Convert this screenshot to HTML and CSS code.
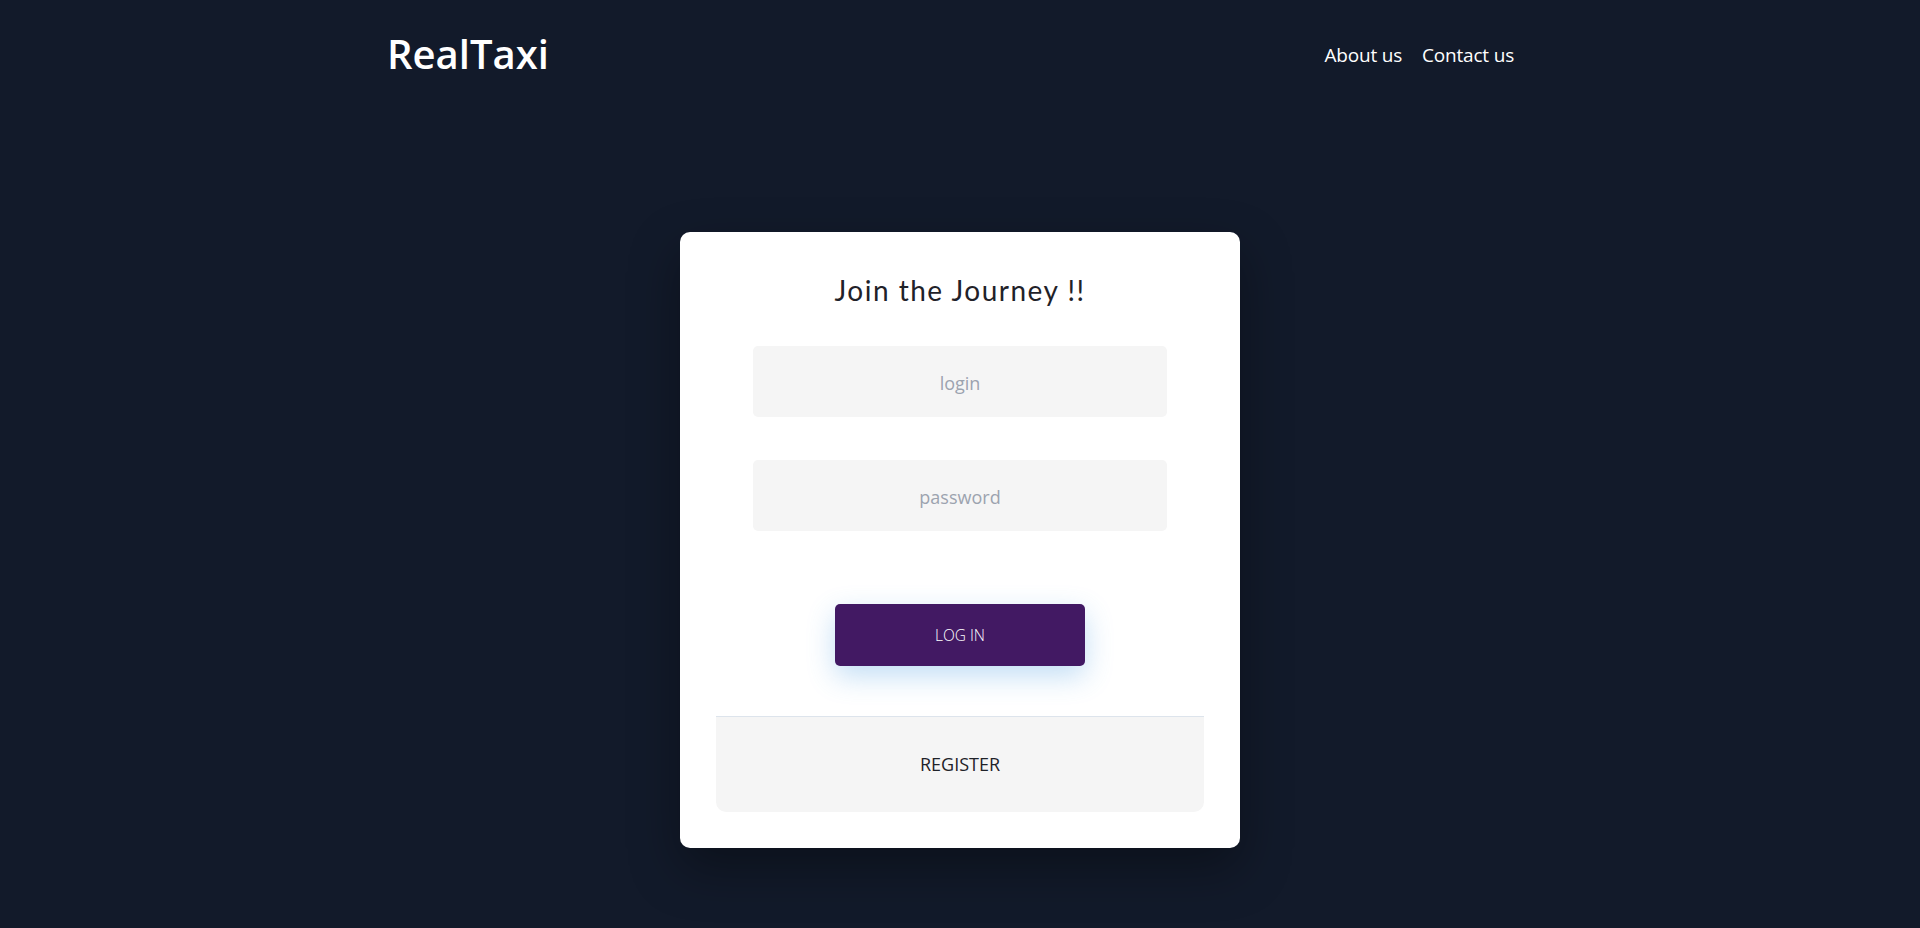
FILE: index.html
```html
<!DOCTYPE html>
<html lang="en">
<head>
<meta charset="utf-8">
<title>RealTaxi</title>
<link rel="stylesheet" href="styles.css">
</head>
<body>
<header class="header">
  <div class="header-inner">
    <a class="logo" href="#">RealTaxi</a>
    <nav class="nav">
      <a class="nav-link" href="#">About us</a>
      <a class="nav-link" href="#">Contact us</a>
    </nav>
  </div>
</header>
<main class="main">
  <div class="card">
    <h1 class="title">Join the Journey !!</h1>
    <form class="form">
      <input class="field" type="text" placeholder="login">
      <input class="field" type="password" placeholder="password">
      <button class="login-btn" type="button">LOG IN</button>
    </form>
    <a class="register" href="#">REGISTER</a>
  </div>
</main>
</body>
</html>
```
FILE: styles.css
```css
* { box-sizing: border-box; }
html, body { margin: 0; padding: 0; }
body {
  background: #121a2a;
  min-height: 928px;
  font-family: "Open Sans", "Liberation Sans", sans-serif;
}
.header { padding-top: 34px; }
.header-inner {
  width: 1152px;
  margin: 0 auto;
  display: flex;
  align-items: center;
  justify-content: space-between;
  padding-left: 3px;
  padding-right: 22px;
}
.logo {
  color: #ffffff;
  text-decoration: none;
  font-family: "Open Sans", sans-serif;
  font-weight: 600;
  font-size: 40px;
  line-height: 40px;
}
.nav { display: flex; gap: 20px; }
.nav-link {
  color: #ffffff;
  text-decoration: none;
  font-size: 19px;
  line-height: 28px;
  margin-top: 1px;
  letter-spacing: -0.2px;
}
.main {
  display: flex;
  justify-content: center;
  padding-top: 158px;
}
.card {
  width: 560px;
  background: #ffffff;
  border-radius: 10px;
  padding: 42px 36px 36px;
  box-shadow: 0 20px 50px rgba(0, 0, 0, 0.35);
  display: flex;
  flex-direction: column;
  align-items: center;
}
.title {
  margin: 0;
  font-family: Lato, "Open Sans", sans-serif;
  font-weight: 400;
  font-size: 28px;
  line-height: 1.2;
  letter-spacing: 1.5px;
  color: #1f2229;
}
.form {
  display: flex;
  flex-direction: column;
  align-items: center;
  margin-top: 38px;
}
.field {
  width: 414px;
  height: 71px;
  border: none;
  border-radius: 5px;
  background: #f5f5f5;
  text-align: center;
  font-family: "Open Sans", sans-serif;
  font-size: 18px;
  color: #333;
  outline: none;
  padding: 4px 0 0;
}
.field + .field { margin-top: 43px; }
.field::placeholder { color: #9ca3af; }
.login-btn {
  margin-top: 73px;
  width: 250px;
  height: 62px;
  border: none;
  border-radius: 5px;
  background: #421963;
  color: #ffffff;
  font-family: "Open Sans", sans-serif;
  font-weight: 300;
  font-size: 15.5px;
  box-shadow: 0 10px 28px rgba(66, 153, 225, 0.32);
  cursor: pointer;
}
.register {
  margin-top: 50px;
  width: 100%;
  height: 96px;
  display: flex;
  align-items: center;
  justify-content: center;
  background: #f5f5f5;
  border-top: 1px solid #dde4ec;
  border-radius: 0 0 10px 10px;
  color: #1f2229;
  text-decoration: none;
  font-size: 18px;
}
```
